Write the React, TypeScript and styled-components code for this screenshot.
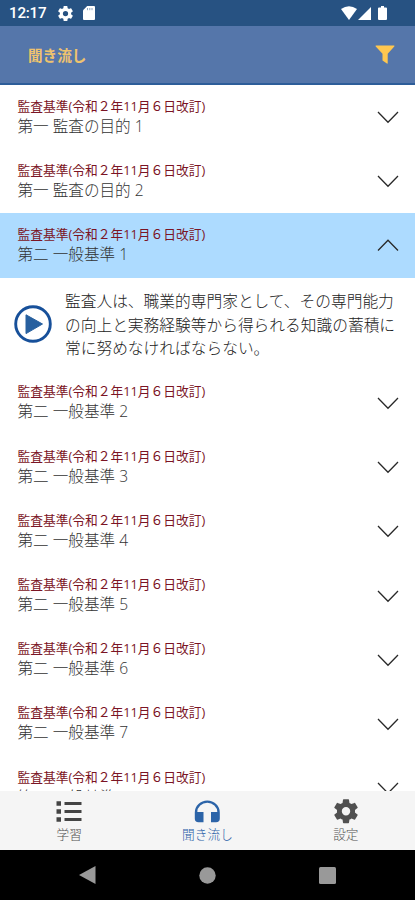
import React from "react";
import styled, { createGlobalStyle } from "styled-components";

const GlobalStyle = createGlobalStyle`
  * { box-sizing: border-box; }
  html, body { margin: 0; padding: 0; background: #fff; overflow: hidden; }
  body { font-family: "Open Sans", "Noto Sans CJK JP", sans-serif; }
`;

const Screen = styled.div`
  width: 415px;
  height: 900px;
  display: flex;
  flex-direction: column;
  overflow: hidden;
  background: #fff;
`;

const StatusBar = styled.header`
  height: 26px;
  flex: none;
  display: flex;
  align-items: center;
  padding: 1px 28px 1px 9px;
  background: #275282;
  color: #fff;
`;

const Clock = styled.span`
  width: 49px;
  font: 500 15.2px/20px Roboto, sans-serif;
  letter-spacing: -0.25px;
`;

const StatusSpacer = styled.span`
  flex: 1;
`;

const Icon = styled.svg`
  display: block;
  flex: none;
`;

const StatusIcon = styled(Icon)<{ $gap: number }>`
  margin-left: ${(p) => p.$gap}px;
`;

const AppBar = styled.div`
  height: 59px;
  flex: none;
  display: flex;
  align-items: center;
  justify-content: space-between;
  padding: 0 20px 0 28px;
  background: #5576aa;
  border-bottom: 2px solid #2d5d99;
`;

const PageTitle = styled.h1`
  margin: 0;
  font: 700 14.6px/22px "Noto Sans CJK JP", sans-serif;
  color: #efc36e;
`;

const List = styled.main`
  flex: 1;
  min-height: 0;
  overflow: hidden;
`;

const Row = styled.div<{ $active?: boolean }>`
  height: 64.2px;
  display: flex;
  align-items: center;
  justify-content: space-between;
  padding: 0 16px 0 17.5px;
  background: ${(p) => (p.$active ? "#addbff" : "#fff")};
`;

const RowText = styled.div`
  display: flex;
  flex-direction: column;
  white-space: nowrap;
`;

const Source = styled.span`
  font-size: 12.75px;
  font-weight: 400;
  line-height: 18px;
  margin-top: -1px;
  color: #7b1424;
`;

const Heading = styled.span`
  font-size: 15.6px;
  font-weight: 300;
  line-height: 21px;
  margin-top: 1px;
  color: #333;
`;

const Detail = styled.div`
  height: 93.3px;
  display: flex;
  align-items: center;
  padding-left: 14px;
`;

const PlayButton = styled.button`
  width: 38px;
  height: 38px;
  margin-right: 13px;
  padding: 0;
  border: 0;
  background: none;
`;

const Passage = styled.p`
  margin: 2px 0 0;
  font-size: 15.72px;
  font-weight: 300;
  line-height: 23.3px;
  color: #222;
  white-space: nowrap;
`;

const TabBar = styled.nav`
  height: 59px;
  flex: none;
  display: grid;
  grid-template-columns: repeat(3, 1fr);
  background: #f5f5f5;
`;

const Tab = styled.div<{ $active?: boolean }>`
  display: flex;
  flex-direction: column;
  align-items: center;
  padding-top: 7px;
  font-size: 12.7px;
  font-weight: 300;
  line-height: 18px;
  color: ${(p) => (p.$active ? "#2c61a8" : "#505050")};
`;

const TabLabel = styled.span``;

const SystemBar = styled.footer`
  height: 50px;
  flex: none;
  display: flex;
  justify-content: space-between;
  align-items: center;
  padding: 0 79px;
  background: #000;
  color: #999;
`;

const GEAR =
  "M19.43 12.98c.04-.32.07-.64.07-.98s-.03-.66-.07-.98l2.11-1.65c.19-.15.24-.42.12-.64l-2-3.46c-.12-.22-.39-.3-.61-.22l-2.49 1c-.52-.4-1.08-.73-1.69-.98l-.38-2.65A.49.49 0 0 0 14 2h-4c-.25 0-.46.18-.49.42l-.38 2.65c-.61.25-1.17.59-1.69.98l-2.49-1c-.23-.09-.49 0-.61.22l-2 3.46c-.13.22-.07.49.12.64l2.11 1.65c-.04.32-.07.65-.07.98s.03.66.07.98l-2.11 1.65c-.19.15-.24.42-.12.64l2 3.46c.12.22.39.3.61.22l2.49-1c.52.4 1.08.73 1.69.98l.38 2.65c.03.24.24.42.49.42h4c.25 0 .46-.18.49-.42l.38-2.65c.61-.25 1.17-.59 1.69-.98l2.49 1c.23.09.49 0 .61-.22l2-3.46c.12-.22.07-.49-.12-.64l-2.11-1.65zM12 15.5A3.5 3.5 0 1 1 12 8.5a3.5 3.5 0 0 1 0 7z";

const Chevron = ({ up }: { up?: boolean }) => (
  <Icon width="22" height="14" viewBox="0 0 22 14" fill="none" stroke="#292929" strokeWidth="1.3">
    <path d={up ? "M1 12.5 L11 2.2 L21 12.5" : "M1 2 L11 12.2 L21 2"} />
  </Icon>
);

const SOURCE = "監査基準(令和２年11月６日改訂)";

interface Standard {
  heading: string;
  passage?: string[];
}

const STANDARDS: Standard[] = [
  { heading: "第一 監査の目的 1" },
  { heading: "第一 監査の目的 2" },
  {
    heading: "第二 一般基準 1",
    passage: [
      "監査人は、職業的専門家として、その専門能力",
      "の向上と実務経験等から得られる知識の蓄積に",
      "常に努めなければならない。",
    ],
  },
  { heading: "第二 一般基準 2" },
  { heading: "第二 一般基準 3" },
  { heading: "第二 一般基準 4" },
  { heading: "第二 一般基準 5" },
  { heading: "第二 一般基準 6" },
  { heading: "第二 一般基準 7" },
  { heading: "第二 一般基準 8" },
];

const StandardItem = ({ heading, passage }: Standard) => (
  <>
    <Row $active={!!passage}>
      <RowText>
        <Source>{SOURCE}</Source>
        <Heading>{heading}</Heading>
      </RowText>
      <Chevron up={!!passage} />
    </Row>
    {passage && (
      <Detail>
        <PlayButton aria-label="再生">
          <Icon width="38" height="38" viewBox="0 0 38 38">
            <circle cx="19" cy="19" r="17.3" fill="#fff" stroke="#17509a" strokeWidth="2.9" />
            <path d="M12 9.8 L28.5 19 L12 28.6 Z" fill="#28609f" stroke="#28609f" strokeLinejoin="round" />
          </Icon>
        </PlayButton>
        <Passage>
          {passage.map((line) => (
            <React.Fragment key={line}>
              {line}
              <br />
            </React.Fragment>
          ))}
        </Passage>
      </Detail>
    )}
  </>
);

export default function App() {
  return (
    <>
      <GlobalStyle />
      <Screen>
        <StatusBar>
          <Clock>12:17</Clock>
          <StatusIcon $gap={0} width="15" height="15" viewBox="2 2 20 20" fill="#fff">
            <path d={GEAR} />
          </StatusIcon>
          <StatusIcon $gap={10} width="12" height="14" viewBox="0 0 12 14">
            <path d="M4.2 0H11Q12 0 12 1V13Q12 14 11 14H1Q0 14 0 13V4.2Z" fill="#fff" />
            <path d="M4.5 2v2.2M6.8 2v2.2M9 2v2.2" stroke="#8da6c2" strokeWidth="1" />
          </StatusIcon>
          <StatusSpacer />
          <StatusIcon $gap={0} width="16" height="14" viewBox="0 0 16 14" fill="#fff">
            <path d="M0 3Q8-2.6 16 3L8 14Z" />
          </StatusIcon>
          <StatusIcon $gap={1} width="13" height="13" viewBox="0 0 13 13" fill="#fff">
            <path d="M13 0V13H0Z" />
          </StatusIcon>
          <StatusIcon $gap={7} width="9" height="14" viewBox="0 0 9 14" fill="#fff">
            <path d="M3 0H6V1.4H8Q9 1.4 9 2.4V13Q9 14 8 14H1Q0 14 0 13V2.4Q0 1.4 1 1.4H3Z" />
          </StatusIcon>
        </StatusBar>
        <AppBar>
          <PageTitle>聞き流し</PageTitle>
          <Icon width="20" height="19" viewBox="0 0 20 19" fill="#ffc74f">
            <path d="M1 .5H19Q19.8.5 19.3 1.4L12.7 8.7V18.2Q12.6 18.9 11.9 18.5L7.5 15.5V8.7L.7 1.4Q.2.5 1 .5Z" />
          </Icon>
        </AppBar>
        <List>
          {STANDARDS.map((item) => (
            <StandardItem key={item.heading} {...item} />
          ))}
        </List>
        <TabBar>
          <Tab>
            <Icon width="26" height="27" viewBox="0 0 26 27" fill="#444">
              <path d="M.5 3.200h4.500v4.500H.5zM.5 11.200h4.500v4.500H.5zM.5 19.200h4.500v4.500H.5zM8.500 4h17v3h-17zM8.500 12h17v3h-17zM8.500 20h17v3h-17z" />
            </Icon>
            <TabLabel>学習</TabLabel>
          </Tab>
          <Tab $active>
            <Icon width="26" height="27" viewBox="0 0 26 27" fill="#2c64a8">
              <path d="M.8 14.500a12.500 12 0 0 1 25 0V20.500Q25.800 24.300 22 24.300H17V14H23.300A10 9.300 0 0 0 3.300 14H9.500V24.300H4.500Q.8 24.300 .8 20.500Z" />
            </Icon>
            <TabLabel>聞き流し</TabLabel>
          </Tab>
          <Tab>
            <Icon width="26" height="27" viewBox="1.200 1 21.600 22.400" fill="#505050">
              <path d={GEAR} />
            </Icon>
            <TabLabel>設定</TabLabel>
          </Tab>
        </TabBar>
        <SystemBar>
          <Icon width="17" height="18" viewBox="0 0 17 18" fill="currentColor">
            <path d="M16.500 0V18L0 9Z" />
          </Icon>
          <Icon width="17" height="17" viewBox="0 0 17 17" fill="currentColor">
            <circle cx="8.500" cy="8.500" r="8.200" />
          </Icon>
          <Icon width="17" height="17" viewBox="0 0 17 17" fill="currentColor">
            <rect width="17" height="17" rx="1.500" />
          </Icon>
        </SystemBar>
      </Screen>
    </>
  );
}
